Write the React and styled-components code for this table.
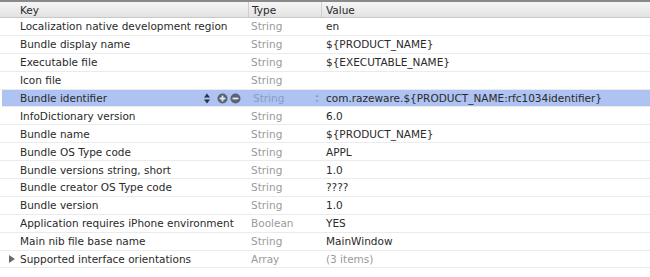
import React from "react";
import styled, { createGlobalStyle } from "styled-components";

const GlobalStyle = createGlobalStyle`
  html, body {
    margin: 0;
    padding: 0;
    background: #ffffff;
  }
  body {
    font-family: "DejaVu Sans", "Liberation Sans", sans-serif;
    font-size: 10.5px;
  }
`;

const rows = [
  { key: "Localization native development region", type: "String", value: "en" },
  { key: "Bundle display name", type: "String", value: "${PRODUCT_NAME}" },
  { key: "Executable file", type: "String", value: "${EXECUTABLE_NAME}" },
  { key: "Icon file", type: "String", value: "" },
  {
    key: "Bundle identifier",
    type: "String",
    value: "com.razeware.${PRODUCT_NAME:rfc1034identifier}",
    selected: true,
  },
  { key: "InfoDictionary version", type: "String", value: "6.0" },
  { key: "Bundle name", type: "String", value: "${PRODUCT_NAME}" },
  { key: "Bundle OS Type code", type: "String", value: "APPL" },
  { key: "Bundle versions string, short", type: "String", value: "1.0" },
  { key: "Bundle creator OS Type code", type: "String", value: "????" },
  { key: "Bundle version", type: "String", value: "1.0" },
  { key: "Application requires iPhone environment", type: "Boolean", value: "YES" },
  { key: "Main nib file base name", type: "String", value: "MainWindow" },
  {
    key: "Supported interface orientations",
    type: "Array",
    value: "(3 items)",
    expandable: true,
    muted: true,
  },
];

const Table = styled.div`
  width: 650px;
  height: 277px;
  overflow: hidden;
  background: #ffffff;
`;

const HeaderRow = styled.div`
  display: grid;
  grid-template-columns: 248px 73px 1fr;
  height: 15px;
  border-top: 2px solid #8a8a8a;
  border-bottom: 1px solid #c8c8c8;
  background: linear-gradient(#f6f6f6, #e2e2e2);
`;

const HeaderCell = styled.div`
  display: flex;
  align-items: center;
  padding-left: ${(p) => p.$indent}px;
  color: #2a2a2a;
  border-left: ${(p) => (p.$first ? "none" : "1px solid #cfcfcf")};
`;

const Row = styled.div`
  display: grid;
  grid-template-columns: 248px 73px 1fr;
  height: 17.9px;
  box-sizing: border-box;
  border-bottom: 1px solid #ebebeb;
  background: ${(p) => (p.$selected ? "#aec3f2" : "transparent")};
  margin-left: ${(p) => (p.$selected ? "2px" : "0")};
`;

const KeyCell = styled.div`
  display: flex;
  align-items: center;
  min-width: 0;
  padding-left: ${(p) => (p.$selected ? "18px" : "20px")};
  padding-right: 5px;
  color: #2a2a2a;
  position: relative;
`;

const KeyText = styled.span`
  flex: 1;
  white-space: nowrap;
  overflow: hidden;
`;

const Disclosure = styled.span`
  position: absolute;
  left: 9px;
  top: 50%;
  margin-top: -4px;
  width: 0;
  height: 0;
  border-top: 4px solid transparent;
  border-bottom: 4px solid transparent;
  border-left: 6px solid #6a6a6a;
`;

const Controls = styled.span`
  display: flex;
  align-items: center;
  gap: 2px;
  margin-right: 4px;
`;

const TypeCell = styled.div`
  display: flex;
  align-items: center;
  justify-content: space-between;
  padding-left: 3px;
  padding-right: 4px;
  color: ${(p) => (p.$selected ? "#8b9bc4" : "#9a9a9a")};
`;

const ValueCell = styled.div`
  display: flex;
  align-items: center;
  padding-left: ${(p) => (p.$selected ? "3px" : "5px")};
  white-space: nowrap;
  overflow: hidden;
  color: ${(p) => (p.$muted ? "#9a9a9a" : "#2a2a2a")};
`;

const Stepper = () => (
  <svg width="8" height="11" viewBox="0 0 8 11" style={{ marginRight: 4 }}>
    <path d="M4 0.5 L7 4.5 L1 4.5 Z" fill="#26304a" />
    <path d="M4 10.5 L7 6.5 L1 6.5 Z" fill="#26304a" />
  </svg>
);

const RoundButton = ({ plus }) => (
  <svg width="11" height="11" viewBox="0 0 11 11">
    <circle cx="5.5" cy="5.5" r="5" fill="#5a6274" />
    <rect x="2.6" y="4.6" width="5.8" height="1.8" fill="#e3e9f7" />
    {plus && <rect x="4.6" y="2.6" width="1.8" height="5.8" fill="#e3e9f7" />}
  </svg>
);

const PopupDots = () => (
  <svg width="4" height="9" viewBox="0 0 4 9">
    <path d="M2 0.5 L3.5 3 L0.5 3 Z" fill="#8b9bc4" />
    <path d="M2 8.5 L3.5 6 L0.5 6 Z" fill="#8b9bc4" />
  </svg>
);

const App = () => {
  return (
    <>
      <GlobalStyle />
      <Table>
        <HeaderRow>
          <HeaderCell $first $indent={20}>Key</HeaderCell>
          <HeaderCell $indent={3}>Type</HeaderCell>
          <HeaderCell $indent={4}>Value</HeaderCell>
        </HeaderRow>
        {rows.map((row) => (
          <Row key={row.key} $selected={row.selected}>
            <KeyCell $selected={row.selected}>
              {row.expandable && <Disclosure />}
              <KeyText>{row.key}</KeyText>
              {row.selected && (
                <Controls>
                  <Stepper />
                  <RoundButton plus />
                  <RoundButton />
                </Controls>
              )}
            </KeyCell>
            <TypeCell $selected={row.selected}>
              <span>{row.type}</span>
              {row.selected && <PopupDots />}
            </TypeCell>
            <ValueCell $selected={row.selected} $muted={row.muted}>
              {row.value}
            </ValueCell>
          </Row>
        ))}
      </Table>
    </>
  );
};

export default App;
